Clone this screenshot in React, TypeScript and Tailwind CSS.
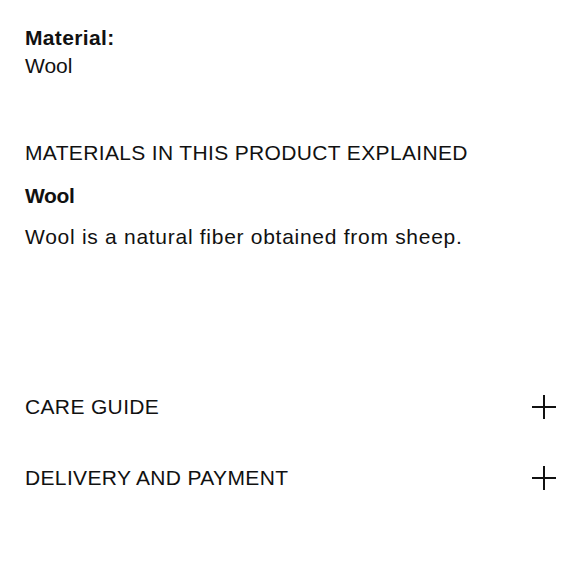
import React from 'react';

const PlusIcon: React.FC = () => (
  <svg width="24" height="24" viewBox="0 0 24 24" fill="none" stroke="currentColor" strokeWidth="2">
    <path d="M12 0v24M0 12h24" />
  </svg>
);

const rows = ['CARE GUIDE', 'DELIVERY AND PAYMENT'];

const App: React.FC = () => {
  return (
    <div className="min-h-[580px] w-[580px] bg-white text-[#111] font-['Liberation_Sans',Arial,sans-serif] text-[21px] leading-[28px] tracking-[0.35px] pl-[25px] pr-[24px] pt-[24px]">
      {/* material summary */}
      <div>
        <p className="font-bold">Material:</p>
        <p className="tracking-normal">Wool</p>
      </div>

      <div className="mt-[59px]">
        <h2>MATERIALS IN THIS PRODUCT EXPLAINED</h2>
        <h3 className="font-bold mt-[15px] tracking-[-0.4px]">Wool</h3>
        <p className="mt-[13px] tracking-[0.72px]">Wool is a natural fiber obtained from sheep.</p>
      </div>

      <div className="mt-[142px] flex flex-col gap-[43px]">
        {rows.map(label => (
          <div key={label} className="flex items-center justify-between">
            <span>{label}</span>
            <PlusIcon />
          </div>
        ))}
      </div>
    </div>
  );
};

export default App;
